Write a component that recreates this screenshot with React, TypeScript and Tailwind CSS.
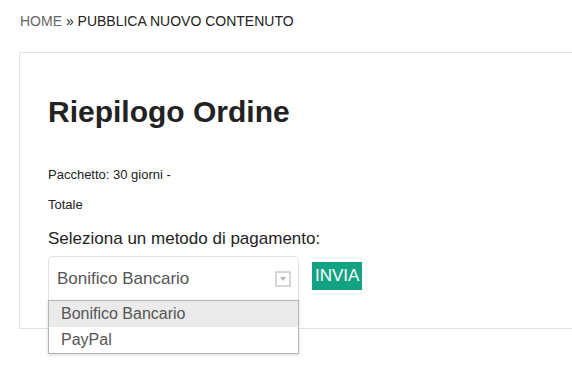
import { useState } from 'react'

const options = ['Bonifico Bancario', 'PayPal']

export default function App() {
  const [selected] = useState('Bonifico Bancario')

  return (
    <div className="min-h-[383px] bg-white font-['Liberation_Sans',Arial,sans-serif] text-[#222]">
      {/* breadcrumb */}
      <div className="px-5 pt-[13px] text-[14px] leading-[16px] text-[#222]">
        <span className="text-[#666]">HOME</span> » PUBBLICA NUOVO CONTENUTO
      </div>

      <div className="ml-[19px] mt-[23px] h-[277px] border-l border-t border-b border-[#e3e3e3] pl-[28px] pt-[39px]">
        <h1 className="text-[30px] font-bold leading-[40px] text-[#222]">Riepilogo Ordine</h1>

        <p className="mt-[36px] text-[13px] leading-[14px] text-[#222]">Pacchetto: 30 giorni -</p>
        <p className="mt-[16px] text-[13px] leading-[14px] text-[#222]">Totale</p>

        <p className="mt-[17px] text-[17px] leading-[20px] text-[#222]">Seleziona un metodo di pagamento:</p>

        <div className="mt-[7px] flex items-start gap-[13px]">
          <div className="relative">
            <div className="flex h-[44px] w-[251px] items-center justify-between rounded-t-[5px] border border-b-0 border-[#e2e2e2] pl-[8px] pr-[7px] text-[17px] text-[#555]">
              <span>{selected}</span>
              <span className="flex h-[16px] w-[16px] items-center justify-center rounded-[1px] border-2 border-[#d6d6d6]">
                <svg width="6" height="4" viewBox="0 0 6 4">
                  <path d="M0 0 L6 0 L3 4 Z" fill="#b5b5b5" />
                </svg>
              </span>
            </div>
            <ul className="absolute left-0 top-[44px] z-10 w-[251px] border border-[#b5b5b5] bg-white shadow-[0_1px_3px_rgba(0,0,0,0.15)]">
              {options.map((o) => (
                <li
                  key={o}
                  className={`h-[26px] pl-[12px] text-[16px] leading-[26px] text-[#555] ${o === selected ? 'bg-[#ebebeb]' : 'bg-white'}`}
                >
                  {o}
                </li>
              ))}
            </ul>
          </div>
          <button className="mt-[6px] h-[28px] bg-[#13a382] px-[3px] text-[17px] leading-[28px] text-white">INVIA</button>
        </div>
      </div>
    </div>
  )
}
